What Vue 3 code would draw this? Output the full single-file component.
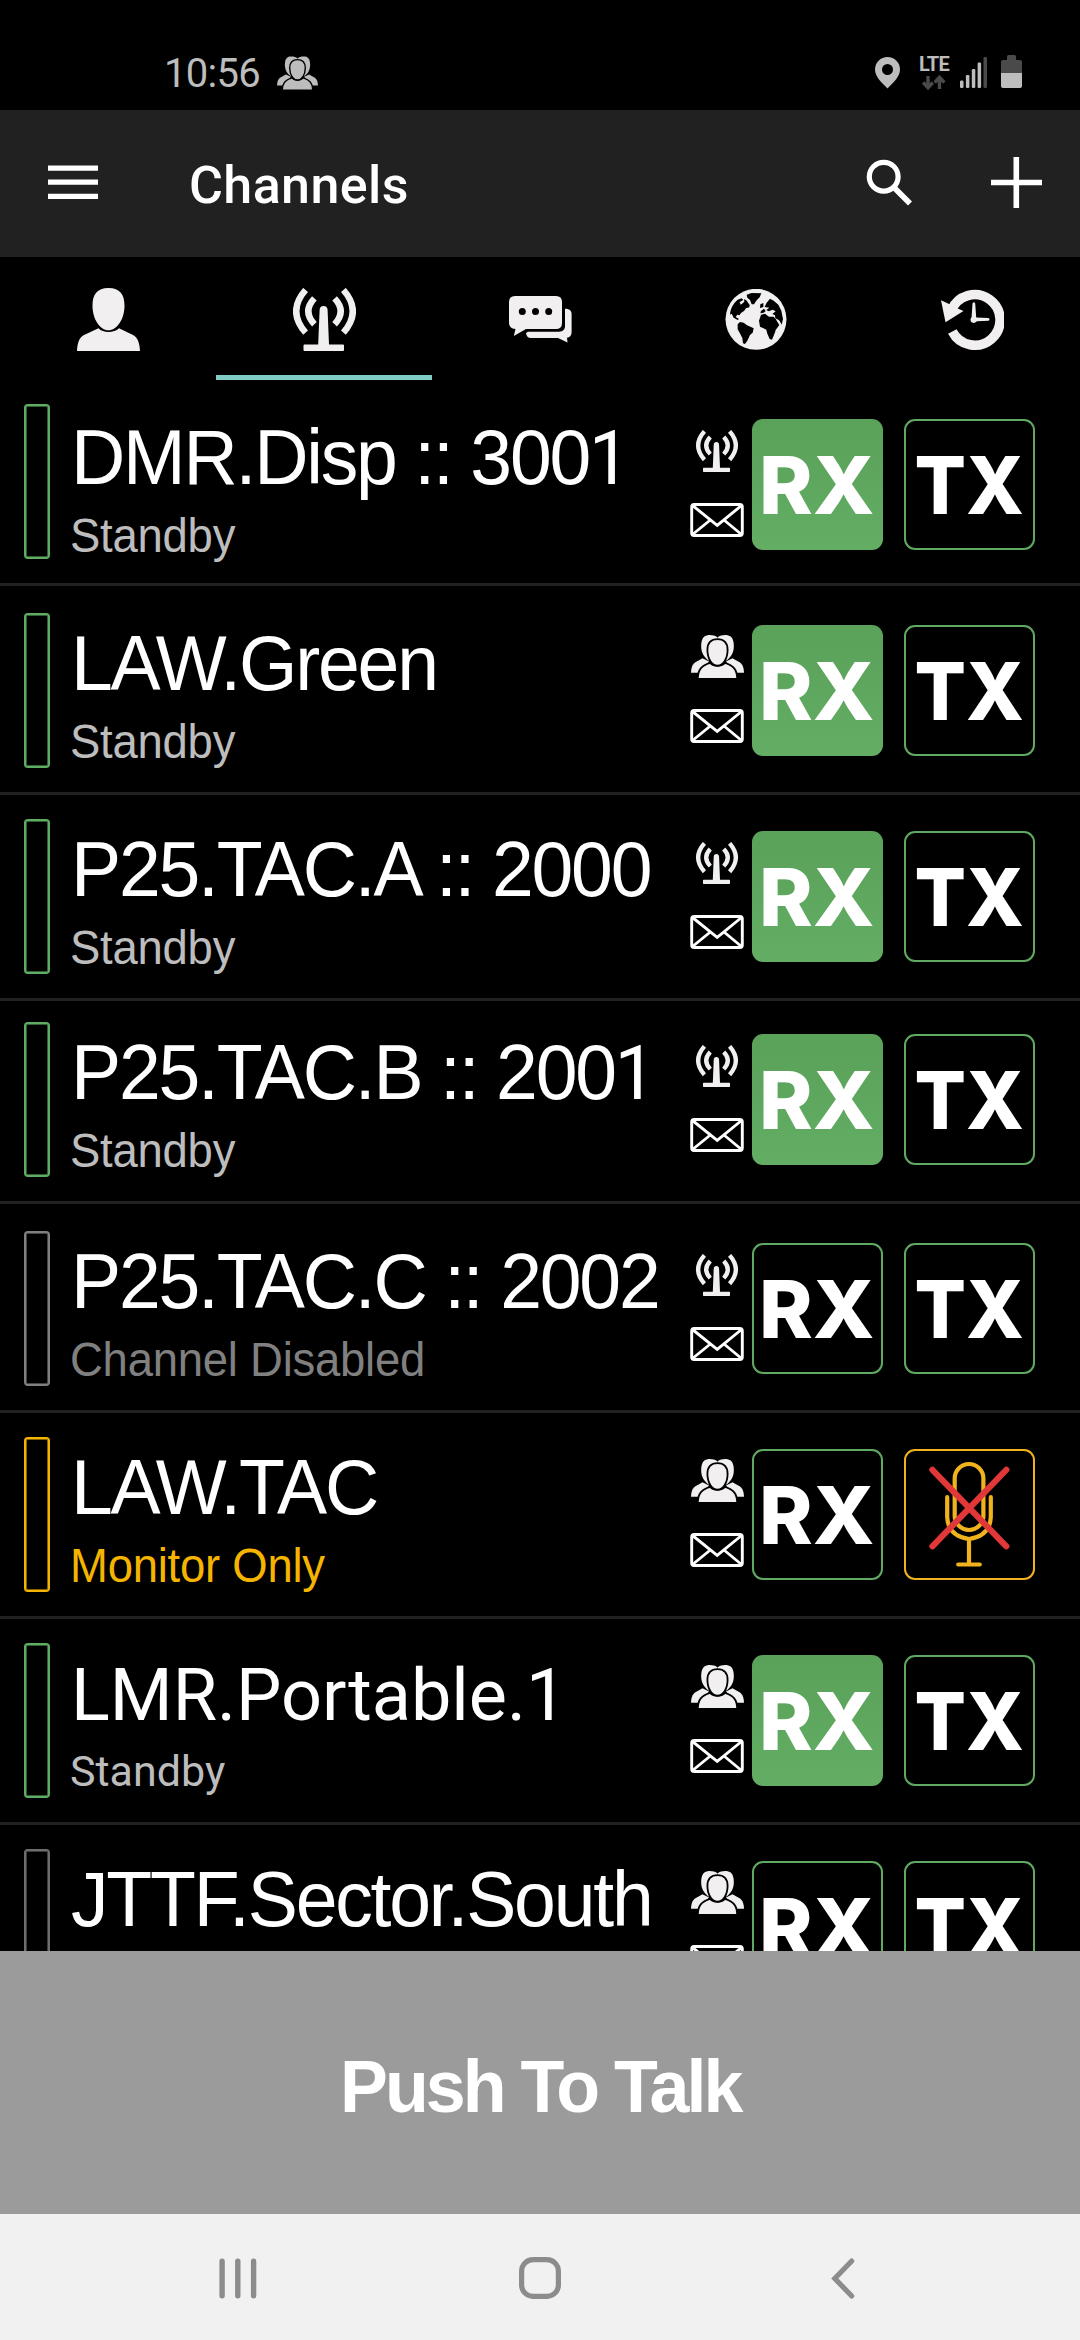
<script setup>
const channels = [
  { name: 'DMR.Disp :: 3001', status: 'Standby', kind: 'radio', rx: true, gap: 24, mod: 'first' },
  { name: 'LAW.Green', status: 'Standby', kind: 'group', rx: true, gap: 27 },
  { name: 'P25.TAC.A :: 2000', status: 'Standby', kind: 'radio', rx: true, gap: 24 },
  { name: 'P25.TAC.B :: 2001', status: 'Standby', kind: 'radio', rx: true, gap: 21 },
  { name: 'P25.TAC.C :: 2002', status: 'Channel Disabled', kind: 'radio', rx: false, gap: 27, mod: 'disabled' },
  { name: 'LAW.TAC', status: 'Monitor Only', kind: 'group', rx: false, gap: 24, mod: 'monitor' },
  { name: 'LMR.Portable.1', status: 'Standby', kind: 'group', rx: true, gap: 24, mod: 'roboto' },
  { name: 'JTTF.Sector.South', status: 'Standby', kind: 'group', rx: false, gap: 24, mod: 'idle' },
]
const parts = (name) => name.split(/(1)/).filter(Boolean)
</script>

<template>
  <svg class="defs" width="0" height="0">
    <symbol id="antenna" viewBox="0 0 63 63">
      <g fill="none" stroke="currentColor" stroke-width="6.4">
        <path d="M12.6 2Q-6.2 23.3 12.6 44.6M21.4 10.4Q9.2 23.3 21.4 36.2M50.4 2Q69.2 23.3 50.4 44.6M41.6 10.4Q53.8 23.3 41.6 36.2" />
      </g>
      <path fill="currentColor" d="M26.6 22Q26.8 18 30.6 18Q34.400 18 34.600 22L36 56.500H50Q51 56.500 51 57.500V62Q51 63 50 63H11.500Q10.500 63 10.500 62V57.500Q10.500 56.500 11.500 56.500H25.200Z" />
    </symbol>
    <symbol id="group" viewBox="0 0 53 43">
      <g fill="currentColor">
        <path d="M26.500 2.600C24 .2 20 -.2 16.500 .2C12 1 10 5 10.200 12C10.500 18 13 22 17.500 25.500L27 20Z" />
        <path d="M26.500 2.600C29 .2 33 -.2 36.500 .2C41 1 43 5 42.800 12C42.500 18 40 22 35.500 25.500L26 20Z" />
        <path d="M11.500 23.300L18 26.500L8 37.700H0C.3 32 1.500 29.500 4 27.500Z" />
        <path d="M41.500 23.300L35 26.500L45 37.700H53C52.700 32 51.500 29.500 49 27.500Z" />
      </g>
      <path fill="currentColor" stroke="#000" stroke-width="1.800" d="M19 27.800C23 31.800 30 31.800 34 27.800C42 30.500 46 34 46.200 43.800H6.800C7 34 11 30.500 19 27.800Z" />
      <path fill="currentColor" stroke="#000" stroke-width="1.800" d="M26.500 4.200C33 4.200 36.700 8 36.600 15C36.500 24 32 30.600 26.500 30.600C21 30.600 16.500 24 16.400 15C16.300 8 20 4.200 26.500 4.200Z" />
    </symbol>
    <symbol id="mail" viewBox="0 0 54 34">
      <g fill="none" stroke="currentColor" stroke-width="2.900">
        <rect x="1.700" y="1.450" width="50.600" height="31.100" rx="2.500" />
        <path d="M2.500 2.500L27.200 22.300L51.500 2.500M2.500 31.500L20.300 17M51.500 31.500L34 17" />
      </g>
    </symbol>
  </svg>

  <div class="screen">
    <div class="statusbar">
      <span class="clock">10:56</span>
      <svg class="status-group" width="41" height="34"><use href="#group" /></svg>
      <svg class="pin" width="25" height="32" viewBox="0 0 25 32">
        <path fill="currentColor" fill-rule="evenodd" d="M12.500 0C19.500 0 25 5.500 25 12.500C25 19.500 19 25 12.500 31.500C6 25 0 19.500 0 12.500C0 5.500 5.500 0 12.500 0ZM12.500 7A5.500 5.500 0 1 0 12.500 18A5.500 5.500 0 1 0 12.500 7Z" />
      </svg>
      <div class="network">
        <span class="lte">LTE</span>
        <svg class="arrows" width="24" height="16" viewBox="0 0 24 16">
          <path fill="none" stroke="#4a4a4a" stroke-width="3.400" d="M6 1V13M1.200 7.500L6 12.800L10.800 7.500M17.500 14V3M12.700 7.500L17.500 2.300L22.300 7.500" />
        </svg>
      </div>
      <svg class="signal" width="27" height="31" viewBox="0 0 27 31">
        <g fill="currentColor">
          <rect x="0" y="23.500" width="3.500" height="7.500" rx="1.200" />
          <rect x="5.900" y="18" width="3.500" height="13" rx="1.200" />
          <rect x="11.800" y="12" width="3.500" height="19" rx="1.200" />
          <rect x="17.600" y="5.500" width="3.500" height="25.500" rx="1.200" />
        </g>
        <rect x="23.500" y="0" width="3.500" height="31" rx="1.200" fill="#4a4a4a" />
      </svg>
      <svg class="battery" width="21" height="33" viewBox="0 0 21 33">
        <path fill="#4a4a4a" d="M6 1.500Q6 0 7.500 0H13.500Q15 0 15 1.500V5H19Q21 5 21 7V18H0V7Q0 5 2 5H6Z" />
        <path fill="currentColor" d="M0 18H21V31Q21 33 19 33H2Q0 33 0 31Z" />
      </svg>
    </div>

    <header class="appbar">
      <svg class="menu" width="50" height="35" viewBox="0 0 50 35">
        <path stroke="#fff" stroke-width="5.200" d="M0 3.100H50M0 17.200H50M0 31.300H50" />
      </svg>
      <h1>Channels</h1>
      <svg class="search" width="48" height="48" viewBox="0 0 48 48">
        <circle cx="17.700" cy="17.700" r="14.400" fill="none" stroke="#fff" stroke-width="5.200" />
        <path d="M29 29.500L44 44.500" stroke="#fff" stroke-width="5.600" />
      </svg>
      <svg class="plus" width="51" height="51" viewBox="0 0 51 51">
        <path stroke="#fff" stroke-width="5.600" d="M0 25.500H51M25.300 0V51" />
      </svg>
    </header>

    <nav class="tabs">
      <div class="tab">
        <svg width="63" height="63" viewBox="0 0 63 63">
          <path fill="currentColor" d="M31.500 0C43 0 47.600 6.500 47.500 18C47.400 31 40 42.300 31.500 42.300C23 42.300 15.600 31 15.500 18C15.400 6.500 20 0 31.500 0ZM21.500 40.300C26 45.300 37 45.300 42 40.300L56 47C60.500 49.500 62.500 54 63 63H0C.5 54 2.500 49.500 7 47Z" />
        </svg>
      </div>
      <div class="tab active"><svg width="63" height="63"><use href="#antenna" /></svg></div>
      <div class="tab">
        <svg width="63" height="47" viewBox="0 0 63 47">
          <path fill="currentColor" fill-rule="evenodd" d="M6 0H47Q53 0 53 6V27Q53 33 47 33H17L4.800 40L6.500 33Q0 32.500 0 27V6Q0 0 6 0ZM13.300 11.900A3.500 3.500 0 1 0 13.300 18.900A3.500 3.500 0 1 0 13.300 11.900ZM26.500 11.900A3.500 3.500 0 1 0 26.500 18.900A3.500 3.500 0 1 0 26.500 11.900ZM39.700 11.900A3.500 3.500 0 1 0 39.700 18.900A3.500 3.500 0 1 0 39.700 11.900Z" />
          <path fill="currentColor" d="M56 12.700C60 12.700 62.600 14.500 62.600 18V36C62.600 39.500 61 41.300 58 41.700L58.500 46.500L49 42H22C19 42 17.300 40 17 37L19 35.700H50C54 35.500 56 33.500 56 30Z" />
        </svg>
      </div>
      <div class="tab">
        <svg width="62" height="62" viewBox="12 14 186 186">
          <circle cx="105" cy="105" r="91.500" fill="currentColor" />
          <g fill="#000">
            <path d="M77 31L92 26L121 27L116 39L107 48L99 60L92 60L87 47L79 40Z" />
            <path d="M27 91C28 72 37 57 50 46L62 42L67 47L56 53L59 61L65 57L70 52L69 45L76 48L86 62L85 69L75 72L69 80L61 85L55 93L49 91L44 98L54 104L50 107L38 100L32 88Z" />
            <path d="M57 113L68 115L77 122L98 132L95 145L87 152L79 169L72 179L66 177L64 161L59 151L50 135L50 120Z" />
            <path d="M120 91L132 88L144 97L158 97L164 104L175 122L164 137L161 147L153 166L146 164L139 148L136 136L117 127L114 109Z" />
            <path d="M137 55L147 43L158 49L172 61L181 79L186 104L182 121L176 110L173 107L163 102L162 93L154 89L164 81L155 76L143 81L136 77L145 70L131 68L134 61Z" />
            <path d="M118 60L127 56L127 68L117 71ZM120 80L129 73L134 80L128 85L118 87Z" />
          </g>
        </svg>
      </div>
      <div class="tab">
        <svg width="63" height="62" viewBox="0 0 63 62">
          <path d="M10.300 21.500A25.300 25.300 0 1 1 11.300 42.500" fill="none" stroke="currentColor" stroke-width="9.600" />
          <path fill="#000" d="M2 43L14 38.500L17 37L22 25L3 37Z" />
          <path fill="currentColor" d="M0 11.300L4.500 33.300L22.500 22L14.500 18.500L7 14.500ZM31.500 14.500Q32.800 12 34.200 14.500L35.200 28.500L47.500 29Q49.500 30.500 47.500 31.800L36 32.200Q32.500 35.500 29.800 32.500Q28.600 30 30.600 28Z" />
        </svg>
      </div>
    </nav>

    <main class="list">
      <section
        v-for="c in channels"
        :key="c.name"
        class="channel"
        :class="c.mod"
        :style="{ paddingTop: c.gap + 'px' }"
      >
        <i class="bar"></i>
        <div class="label">
          <div class="name">
            <template v-if="c.mod === 'roboto'">{{ c.name }}</template>
            <template v-else><span v-for="(p, i) in parts(c.name)" :key="i" :class="{ one: p === '1' }">{{ p }}</span></template>
          </div>
          <div class="status">{{ c.status }}</div>
        </div>
        <div class="kinds">
          <svg v-if="c.kind === 'radio'" class="radio" width="44" height="42"><use href="#antenna" /></svg>
          <svg v-else class="people" width="53" height="43"><use href="#group" /></svg>
          <svg class="mail" width="54" height="34"><use href="#mail" /></svg>
        </div>
        <div class="btn rx" :class="{ on: c.rx }">
          <svg width="131" height="131" viewBox="0 0 131 131">
            <text x="7" y="94.800" textLength="115.500" lengthAdjust="spacingAndGlyphs">RX</text>
          </svg>
        </div>
        <div class="btn tx">
          <svg v-if="c.mod === 'monitor'" width="131" height="131" viewBox="0 0 131 131" fill="none" stroke-linecap="round">
            <g stroke="#f0b31e" stroke-width="4.200">
              <rect x="50.700" y="15" width="28.700" height="66" rx="14.350" />
              <path d="M43.200 48.200V68Q44 87 65 90Q86 87 86.800 68V48.200M65 90V115M54.200 115.500H75.800" />
            </g>
            <path stroke="#e03838" stroke-width="6.200" d="M28.400 20.800L102.300 97.300M102.300 20.800L28.400 97.300" />
          </svg>
          <svg v-else width="131" height="131" viewBox="0 0 131 131">
            <text x="10.500" y="94.800" textLength="109.500" lengthAdjust="spacingAndGlyphs">TX</text>
          </svg>
        </div>
      </section>
    </main>

    <div class="ptt"><span>Push To Talk</span></div>

    <footer class="navbar">
      <svg class="recents" width="38" height="41" viewBox="0 0 38 41">
        <path stroke="#8c8c8c" stroke-width="5.400" stroke-linecap="round" d="M3.100 3.200V37.800M18.800 3.200V37.800M34.600 3.200V37.800" />
      </svg>
      <svg class="home" width="42" height="42" viewBox="0 0 42 42">
        <rect x="2.600" y="2.600" width="36.800" height="36.800" rx="11.500" fill="none" stroke="#8c8c8c" stroke-width="5.200" />
      </svg>
      <svg class="back" width="24" height="41" viewBox="0 0 24 41">
        <path fill="none" stroke="#8c8c8c" stroke-width="5.200" stroke-linecap="round" d="M20.700 3L3.800 20.500L20.700 38" />
      </svg>
    </footer>
  </div>
</template>

<style>
body {
  background: #000;
}
</style>

<style scoped>
.defs {
  position: absolute;
}
svg {
  display: block;
  flex: none;
}
.screen {
  width: 1080px;
  height: 2340px;
  display: flex;
  flex-direction: column;
  overflow: hidden;
  background: #000;
  color: #fff;
  font-family: "Liberation Sans", Arial, sans-serif;
}
.statusbar {
  height: 110px;
  flex: none;
  box-sizing: border-box;
  padding: 55px 58px 0 164px;
  display: flex;
  align-items: flex-start;
  color: #bdbdbd;
  font-family: Roboto, sans-serif;
}
.clock {
  font-size: 40px;
  line-height: 40px;
  margin-top: -1px;
  width: 113px;
  letter-spacing: -0.7px;
}
.status-group {
  margin-top: 1px;
}
.pin {
  margin: 2px 19px 0 auto;
}
.network {
  width: 30px;
  margin-right: 11px;
}
.lte {
  display: block;
  font-size: 20px;
  font-weight: 700;
  line-height: 20px;
  margin-top: -1px;
  letter-spacing: -0.8px;
}
.arrows {
  margin: 1px 0 0 3px;
}
.signal {
  margin: 2px 14px 0 0;
}
.appbar {
  height: 147px;
  flex: none;
  display: flex;
  align-items: center;
  box-sizing: border-box;
  padding: 0 38px 2px 48px;
  background: #212121;
}
h1 {
  margin: 7px auto 0 91px;
  font: 500 52px/60px Roboto, sans-serif;
  letter-spacing: 0.4px;
}
.search {
  margin-right: 77px;
}
.tabs {
  height: 123px;
  flex: none;
  display: flex;
  color: #f1eff0;
}
.tab {
  width: 216px;
  box-sizing: border-box;
  padding-top: 7px;
  border-bottom: 5px solid transparent;
  display: flex;
  align-items: center;
  justify-content: center;
}
.tab.active {
  border-color: #80cbc4;
}
.list {
  flex: none;
  height: 1571px;
  overflow: hidden;
}
.channel {
  --line: #5fad63;
  display: flex;
  align-items: flex-start;
  padding: 24px 45px 24px 24px;
  height: 155px;
  border-bottom: 3px solid #212121;
}
.bar {
  width: 26px;
  height: 155px;
  box-sizing: border-box;
  border: 2px solid var(--line);
  border-radius: 4px;
  box-shadow: inset 0 0 0 1px color-mix(in srgb, var(--line) 55%, #000);
}
.label {
  width: 620px;
  margin-left: 20px;
  white-space: nowrap;
}
.name {
  margin-left: 1px;
  font-size: 78.5px;
  line-height: 100px;
  height: 100px;
  letter-spacing: -2.3px;
  transform: scaleX(0.957);
  transform-origin: left;
}
.one {
  font-family: Roboto, sans-serif;
  font-size: 76px;
}
.status {
  font-size: 47.5px;
  line-height: 57px;
  letter-spacing: -0.25px;
  color: #bdbdbd;
  transform: scaleX(0.957);
  transform-origin: left;
}
.kinds {
  width: 54px;
  height: 155px;
  margin-right: 8px;
  display: flex;
  flex-direction: column;
  align-items: center;
  color: #f1eff0;
}
.radio {
  margin: 23px 0 31px;
}
.people {
  margin: 22px 0 31px;
}
.mail {
  color: #fff;
}
.btn {
  width: 131px;
  height: 131px;
  box-sizing: border-box;
  margin: 12px 21px 0 0;
  border: 2px solid #5fa962;
  border-radius: 11px;
}
.btn svg {
  margin: -2px;
}
.btn.on {
  border: 0;
  background: linear-gradient(#5aa159, #63ad64);
}
.btn.on svg {
  margin: 0;
}
.btn.tx {
  margin-right: 0;
}
.btn text {
  font: 800 79.7px Inter, "Liberation Sans", sans-serif;
  fill: #fff;
}
.first .label,
.first .kinds {
  margin-top: 3px;
}
.first .btn {
  margin-top: 15px;
}
.disabled {
  --line: #808080;
}
.idle {
  --line: #6e6e6e;
}
.disabled .status {
  color: #808080;
}
.monitor {
  --line: #f4b400;
}
.monitor .status {
  color: #f4b400;
}
.monitor .tx {
  border-color: #f0b31e;
}
.roboto .name,
.roboto .status {
  font-family: Roboto, sans-serif;
  letter-spacing: 0;
  transform: none;
}
.roboto .name {
  font-size: 72px;
  line-height: 105px;
  height: 105px;
}
.roboto .status {
  font-size: 43px;
  line-height: 47px;
}
.ptt {
  height: 263px;
  flex: none;
  background: #9b9b9b;
  display: flex;
  justify-content: center;
}
.ptt span {
  font-size: 75px;
  font-weight: 700;
  line-height: 271px;
  letter-spacing: -3.1px;
  transform: scaleX(0.957);
}
.navbar {
  height: 126px;
  flex: none;
  box-sizing: border-box;
  padding: 2px 0 0 219px;
  background: #f1f1f1;
  display: flex;
  align-items: center;
}
.home {
  margin: 0 270px 0 262px;
}
</style>
